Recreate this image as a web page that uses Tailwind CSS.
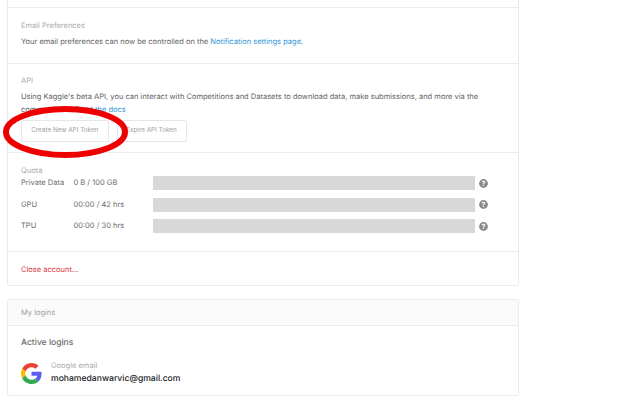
<!DOCTYPE html>
<html><head><meta charset="utf-8"><script src="https://cdn.jsdelivr.net/npm/@tailwindcss/browser@4"></script></head>
<body class="bg-white font-['Inter',sans-serif] overflow-hidden [text-rendering:geometricPrecision]">
<div class="relative w-[640px] h-[406px] overflow-hidden">
  <div class="ml-[7px] w-[512px] flex flex-col">
    <div class="border-x border-b border-[#ececec] rounded-b-[2px] flex flex-col">
      <div class="h-[8px] border-b border-[#ececec]"></div>
      <section class="h-[56px] border-b border-[#ececec] px-[13px] pt-[12px]">
        <h3 class="text-[7.500px] leading-[11px] text-[#aaaaaa]">Email Preferences</h3>
        <p class="mt-[5px] text-[7.500px] leading-[11px] text-[#5f6368]">Your email preferences can now be controlled on the <a class="text-[#2f96d8]">Notification settings page</a>.</p>
      </section>
      <section class="h-[89px] border-b border-[#ececec] px-[13px] pt-[11px]">
        <h3 class="text-[7.500px] leading-[11px] text-[#aaaaaa]">API</h3>
        <p class="mt-[5px] text-[7.500px] leading-[12.500px] text-[#5f6368]">Using Kaggle's beta API, you can interact with Competitions and Datasets to download data, make submissions, and more via the<br>command line. Read <a class="text-[#2f96d8]">the docs</a></p>
        <div class="mt-[4px] flex gap-[8px]">
          <button class="w-[87.500px] h-[22px] border border-[#e6e6e6] rounded-[2px] text-[6.350px] text-[#a0a0a0]">Create New API Token</button>
          <button class="w-[70px] h-[22px] border border-[#e6e6e6] rounded-[2px] text-[6.350px] text-[#a0a0a0]">Expire API Token</button>
        </div>
      </section>
      <section class="h-[99px] border-b border-[#ececec] pl-[13px] pt-[12px]">
        <h3 class="text-[7.500px] leading-[11px] text-[#aaaaaa]">Quota</h3>
        <div class="flex flex-col gap-[7.500px] text-[7.500px] text-[#6b6b6b]">
          <div class="flex items-center h-[14px]">
            <span class="w-[52.500px]">Private Data</span><span class="w-[79.500px]">0 B / 100 GB</span>
            <div class="w-[321.500px] h-[14px] bg-[#d8d8d8]"></div>
            <svg class="ml-[4.500px]" width="9" height="9" viewBox="0 0 9 9"><circle cx="4.500" cy="4.500" r="4.400" fill="#8a8a8a"/><text x="4.500" y="7" text-anchor="middle" font-size="7" font-weight="700" fill="#fff">?</text></svg>
          </div>
          <div class="flex items-center h-[14px]">
            <span class="w-[52.500px]">GPU</span><span class="w-[79.500px]">00:00 / 42 hrs</span>
            <div class="w-[321.500px] h-[14px] bg-[#d8d8d8]"></div>
            <svg class="ml-[4.500px]" width="9" height="9" viewBox="0 0 9 9"><circle cx="4.500" cy="4.500" r="4.400" fill="#8a8a8a"/><text x="4.500" y="7" text-anchor="middle" font-size="7" font-weight="700" fill="#fff">?</text></svg>
          </div>
          <div class="flex items-center h-[14px]">
            <span class="w-[52.500px]">TPU</span><span class="w-[79.500px]">00:00 / 30 hrs</span>
            <div class="w-[321.500px] h-[14px] bg-[#d8d8d8]"></div>
            <svg class="ml-[4.500px]" width="9" height="9" viewBox="0 0 9 9"><circle cx="4.500" cy="4.500" r="4.400" fill="#8a8a8a"/><text x="4.500" y="7" text-anchor="middle" font-size="7" font-weight="700" fill="#fff">?</text></svg>
          </div>
        </div>
      </section>
      <section class="h-[33px] px-[13px] pt-[12px]">
        <a class="block text-[7.500px] leading-[11px] text-[#d9363e]">Close account...</a>
      </section>
    </div>
    <div class="mt-[13px] h-[97px] border border-[#ececec] rounded-[2px]">
      <div class="h-[26px] bg-[#fafafa] border-b border-[#ececec] px-[13px] flex items-center text-[7.500px] text-[#a0a0a0]">My logins</div>
      <div class="px-[13px] pt-[11px]">
        <h3 class="text-[8.500px] leading-[13px] font-medium text-[#6b6b6b]">Active logins</h3>
        <div class="mt-[10px] flex items-center gap-[9px]">
          <svg width="21" height="21" viewBox="0 0 48 48"><path fill="#EA4335" d="M24 9.5c3.5 0 6.7 1.2 9.2 3.6l6.9-6.9C35.9 2.4 30.5 0 24 0 14.6 0 6.5 5.4 2.6 13.2l8 6.2C12.5 13.7 17.800 9.500 24 9.500z"/><path fill="#5B5FEF" d="M47 24.500c0-1.600-.1-3.100-.4-4.500H24v9h13c-.6 3-2.200 5.500-4.800 7.200l7.700 6C44.400 38 47 31.800 47 24.500z"/><path fill="#FBBC05" d="M10.600 28.600c-.5-1.500-.8-3-.8-4.600s.3-3.100.8-4.600l-8-6.200C.9 16.500 0 20.100 0 24s.9 7.500 2.600 10.800l8-6.200z"/><path fill="#34A853" d="M24 48c6.500 0 11.900-2.100 15.900-5.800l-7.700-6c-2.200 1.400-4.900 2.300-8.200 2.300-6.200 0-11.500-4.200-13.400-9.900l-8 6.200C6.500 42.600 14.600 48 24 48z"/></svg>
          <div>
            <div class="text-[7.500px] leading-[11px] text-[#aaaaaa]">Google email</div>
            <div class="mt-[2px] text-[8.600px] leading-[13px] font-medium text-[#202124]">mohamedanwarvic@gmail.com</div>
          </div>
        </div>
      </div>
    </div>
  </div>
  <svg class="absolute left-0 top-[100px]" width="140" height="65" viewBox="0 0 140 65"><ellipse cx="65.500" cy="32" rx="59.500" ry="23" fill="none" stroke="#ee0000" stroke-width="6"/></svg>
</div>
</body></html>
